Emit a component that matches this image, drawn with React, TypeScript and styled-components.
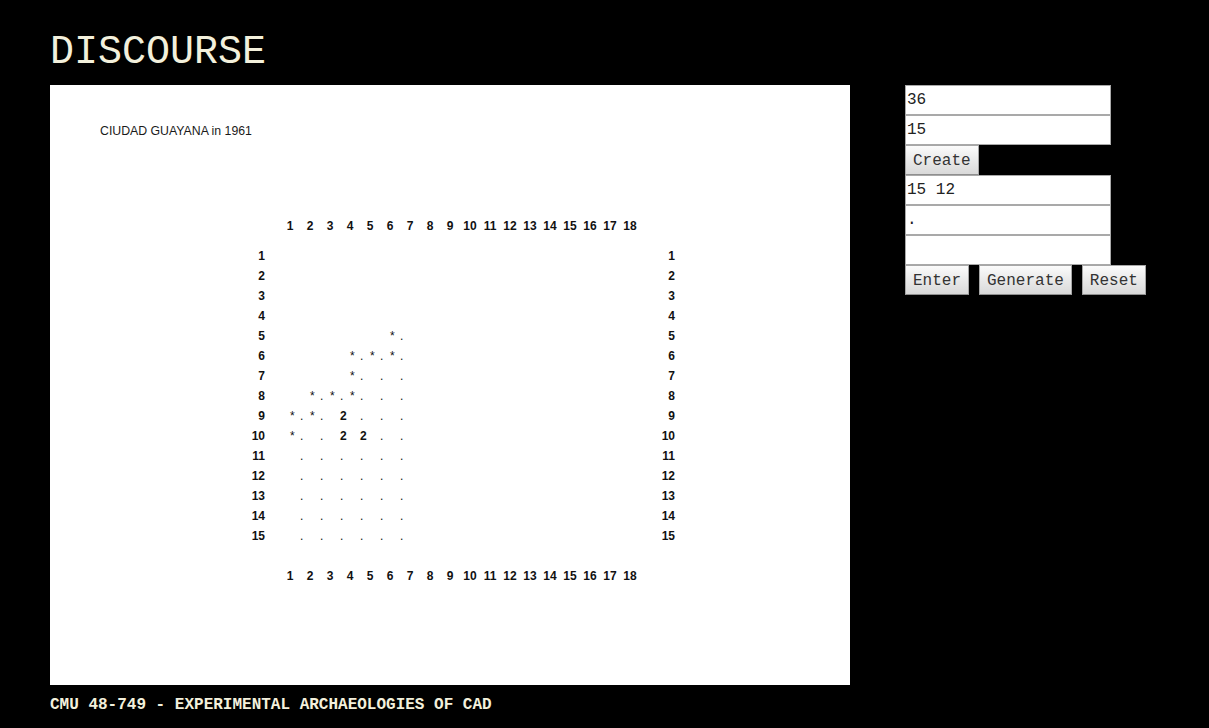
import React from "react";
import styled, { createGlobalStyle } from "styled-components";

const GlobalStyle = createGlobalStyle`
  html, body {
    margin: 0;
    padding: 0;
    background: #000;
  }
  body {
    font-family: "Liberation Mono", "Courier New", monospace;
  }
`;

const Page = styled.div`
  padding: 30px 0 0 50px;
  min-height: 728px;
  box-sizing: border-box;
  background: #000;
`;

const Title = styled.h1`
  margin: 0;
  font-family: "Liberation Mono", "Courier New", monospace;
  font-weight: normal;
  font-size: 40px;
  line-height: 46px;
  height: 46px;
  color: #f3f0dc;
`;

const Main = styled.div`
  display: flex;
  align-items: flex-start;
  gap: 55px;
  margin-top: 9px;
`;

const Sheet = styled.div`
  width: 800px;
  height: 600px;
  background: #fff;
  box-sizing: border-box;
  padding: 36px 0 0 50px;
  font-family: "Liberation Sans", Arial, sans-serif;
  font-size: 12px;
  color: #111;
`;

const Caption = styled.div`
  line-height: 20px;
  height: 20px;
  font-size: 12.3px;
  color: #1a1a1a;
`;

const Board = styled.div`
  margin: 75px 0 0 135px;
  display: flex;
  flex-direction: column;
`;

const HeaderRow = styled.div<{ $bottom?: boolean }>`
  display: flex;
  padding-left: 45px;
  height: 20px;
  line-height: 20px;
  margin-top: ${(p) => (p.$bottom ? "20px" : "0")};
  margin-bottom: ${(p) => (p.$bottom ? "0" : "10px")};
`;

const ColLabel = styled.span`
  width: 20px;
  text-align: center;
  font-weight: bold;
`;

const Row = styled.div`
  display: flex;
  height: 20px;
  line-height: 20px;
`;

const RowLabel = styled.span<{ $side: "left" | "right" }>`
  width: ${(p) => (p.$side === "left" ? "30px" : "25px")};
  margin-right: ${(p) => (p.$side === "left" ? "25px" : "0")};
  text-align: right;
  font-weight: bold;
`;

const Cell = styled.span<{ $bold?: boolean }>`
  width: 10px;
  text-align: left;
  white-space: pre;
  font-weight: ${(p) => (p.$bold ? "bold" : "normal")};
  color: #111;
`;

const Panel = styled.div`
  display: flex;
  flex-direction: column;
  width: 206px;
`;

const Field = styled.input`
  box-sizing: border-box;
  width: 206px;
  height: 30px;
  margin: 0;
  padding: 0 1px;
  border: 1px solid #a9a9a9;
  background: #fff;
  color: #222;
  font-family: "Liberation Mono", "Courier New", monospace;
  font-size: 16px;
  outline: none;
`;

const ButtonRow = styled.div`
  display: flex;
  gap: 10px;
`;

const Button = styled.button`
  box-sizing: border-box;
  height: 30px;
  margin: 0;
  padding: 1px 7px 0;
  border: 1px solid #a7a7a7;
  border-bottom-color: #8f8f8f;
  border-radius: 0;
  background: linear-gradient(#fbfbfb, #e9e9e9 50%, #d9d9d9);
  color: #333;
  font-family: "Liberation Mono", "Courier New", monospace;
  font-size: 16px;
  white-space: nowrap;
  cursor: pointer;
  align-self: flex-start;
`;

const Footer = styled.div`
  margin-top: 11px;
  font-family: "Liberation Mono", "Courier New", monospace;
  font-weight: bold;
  font-size: 16px;
  line-height: 18px;
  color: #f3f0dc;
`;

const COLS = 18;
const ROWS = 15;

const rowData: string[] = [
  "",
  "",
  "",
  "",
  "          *.",
  "      *.*.*.",
  "      *. . .",
  "  *.*.*. . .",
  "*.*. 2 . . .",
  "*. . 2 2 . .",
  " . . . . . .",
  " . . . . . .",
  " . . . . . .",
  " . . . . . .",
  " . . . . . .",
];

const ColumnLabels: React.FC<{ bottom?: boolean }> = ({ bottom }) => (
  <HeaderRow $bottom={bottom}>
    {Array.from({ length: COLS }, (_, i) => (
      <ColLabel key={i}>{i + 1}</ColLabel>
    ))}
  </HeaderRow>
);

export default function App() {
  return (
    <>
      <GlobalStyle />
      <Page>
        <Title>DISCOURSE</Title>
        <Main>
          <Sheet>
            <Caption>CIUDAD GUAYANA in 1961</Caption>
            <Board>
              <ColumnLabels />
              {Array.from({ length: ROWS }, (_, r) => {
                const s = rowData[r].padEnd(36, " ");
                return (
                  <Row key={r}>
                    <RowLabel $side="left">{r + 1}</RowLabel>
                    {s.split("").map((ch, c) => (
                      <Cell key={c} $bold={ch === "2"}>
                        {ch === " " ? "" : ch}
                      </Cell>
                    ))}
                    <RowLabel $side="right">{r + 1}</RowLabel>
                  </Row>
                );
              })}
              <ColumnLabels bottom />
            </Board>
          </Sheet>
          <Panel>
            <Field defaultValue="36" />
            <Field defaultValue="15" />
            <Button>Create</Button>
            <Field defaultValue="15 12" />
            <Field defaultValue="." />
            <Field defaultValue="" />
            <ButtonRow>
              <Button>Enter</Button>
              <Button>Generate</Button>
              <Button>Reset</Button>
            </ButtonRow>
          </Panel>
        </Main>
        <Footer>CMU 48-749 - EXPERIMENTAL ARCHAEOLOGIES OF CAD</Footer>
      </Page>
    </>
  );
}
